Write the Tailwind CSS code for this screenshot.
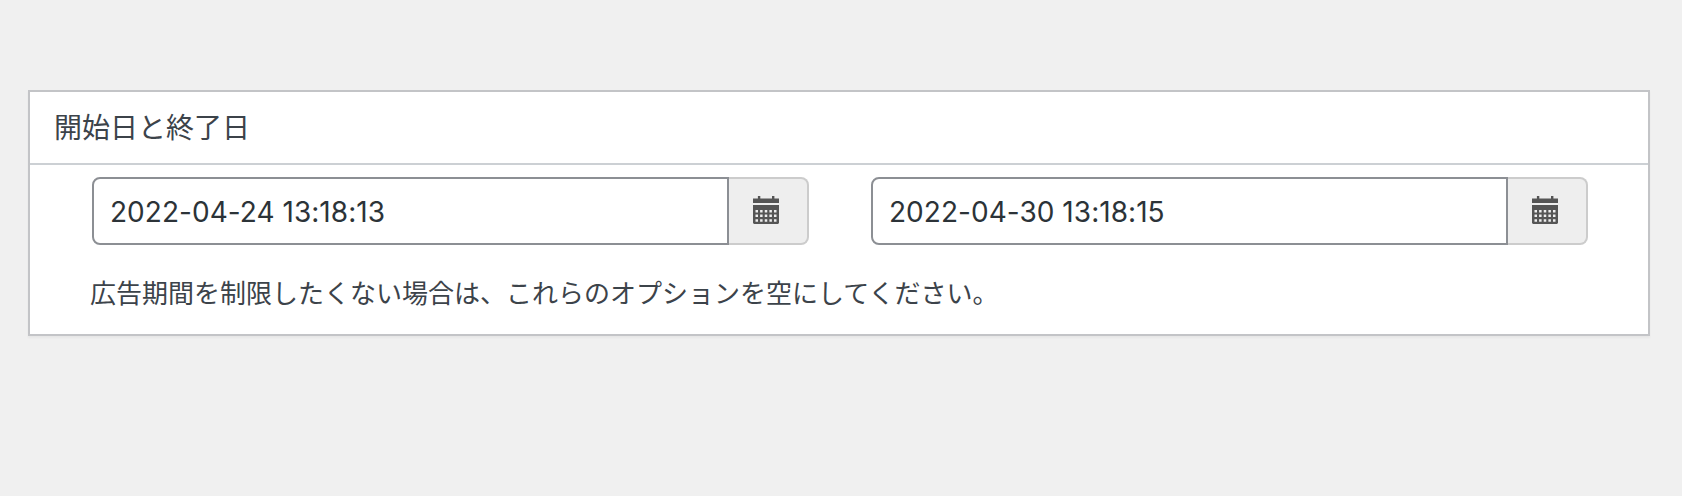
<!doctype html>
<html lang="ja">

<head>
  <meta charset="UTF-8" />
  <meta name="viewport" content="width=device-width, initial-scale=1.0" />
  <title>開始日と終了日</title>
  <script src="https://cdn.jsdelivr.net/npm/@tailwindcss/browser@4"></script>
</head>

<body class="h-screen overflow-hidden bg-[#f0f0f0] pt-[90px] pl-7 pr-8 font-['Inter','Noto_Sans_CJK_JP',sans-serif] text-[#3c434a]">
  <section class="h-[246px] border-2 border-[#c3c4c7] bg-white shadow-[0_2px_2px_rgba(0,0,0,0.04)]">
    <h2 class="flex h-[73px] items-center border-b-2 border-[#ccd0d4] pb-1 pl-6 text-[28px] leading-none font-['Noto_Sans_CJK_JP',sans-serif]">開始日と終了日</h2>

    <!-- Fechas de inicio y fin -->
    <div class="flex gap-[62px] pt-3 pl-[62px]">
      <div class="flex h-[68px] w-[717px]">
        <input type="text" value="2022-04-24 13:18:13"
          class="w-[637px] rounded-l-lg border-2 border-[#8c8f94] bg-white px-4 pt-0.5 text-[28px] tracking-[0.04px] text-[#2c3338] outline-none" />
        <button type="button" class="flex flex-1 rounded-r-lg border-2 border-l-0 border-[#cccccc] bg-[#eeeeee] pt-[17px] pl-6">
          <svg class="h-7 w-[26px]" viewBox="0 0 26 28" fill="#555">
            <path d="M0 2.500h4.900V0h2.400v2.500h11.700V0h2.400v2.500H26V7H0z" />
            <path fill-rule="evenodd" d="M0 9h26v18l-1 1H1l-1-1zM2.500 14v2.500h2.500V14zM7.100 14v2.500h2.500V14zM11.750 14v2.500h2.500V14zM16.400 14v2.500h2.500V14zM21 14v2.500h2.500V14zM2.500 18.500v2.500h2.500v-2.500zM7.100 18.500v2.500h2.500v-2.500zM11.750 18.500v2.500h2.500v-2.500zM16.400 18.500v2.500h2.500v-2.500zM21 18.500v2.500h2.500v-2.500zM2.500 23.200v2.500h2.500v-2.500zM7.100 23.200v2.500h2.500v-2.500zM11.750 23.200v2.500h2.500v-2.500zM16.400 23.200v2.500h2.500v-2.500zM21 23.200v2.500h2.500v-2.500z" />
          </svg>
        </button>
      </div>
      <div class="flex h-[68px] w-[717px]">
        <input type="text" value="2022-04-30 13:18:15"
          class="w-[637px] rounded-l-lg border-2 border-[#8c8f94] bg-white px-4 pt-0.5 text-[28px] tracking-[0.04px] text-[#2c3338] outline-none" />
        <button type="button" class="flex flex-1 rounded-r-lg border-2 border-l-0 border-[#cccccc] bg-[#eeeeee] pt-[17px] pl-6">
          <svg class="h-7 w-[26px]" viewBox="0 0 26 28" fill="#555">
            <path d="M0 2.500h4.900V0h2.400v2.500h11.700V0h2.400v2.500H26V7H0z" />
            <path fill-rule="evenodd" d="M0 9h26v18l-1 1H1l-1-1zM2.500 14v2.500h2.500V14zM7.100 14v2.500h2.500V14zM11.750 14v2.500h2.500V14zM16.400 14v2.500h2.500V14zM21 14v2.500h2.500V14zM2.500 18.500v2.500h2.500v-2.500zM7.100 18.500v2.500h2.500v-2.500zM11.750 18.500v2.500h2.500v-2.500zM16.400 18.500v2.500h2.500v-2.500zM21 18.500v2.500h2.500v-2.500zM2.500 23.200v2.500h2.500v-2.500zM7.100 23.200v2.500h2.500v-2.500zM11.750 23.200v2.500h2.500v-2.500zM16.400 23.200v2.500h2.500v-2.500zM21 23.200v2.500h2.500v-2.500z" />
          </svg>
        </button>
      </div>
    </div>

    <p class="mt-[27px] pl-[60px] text-[26px] leading-10 font-['Noto_Sans_CJK_JP',sans-serif]">広告期間を制限したくない場合は、これらのオプションを空にしてください。</p>
  </section>
</body>

</html>
